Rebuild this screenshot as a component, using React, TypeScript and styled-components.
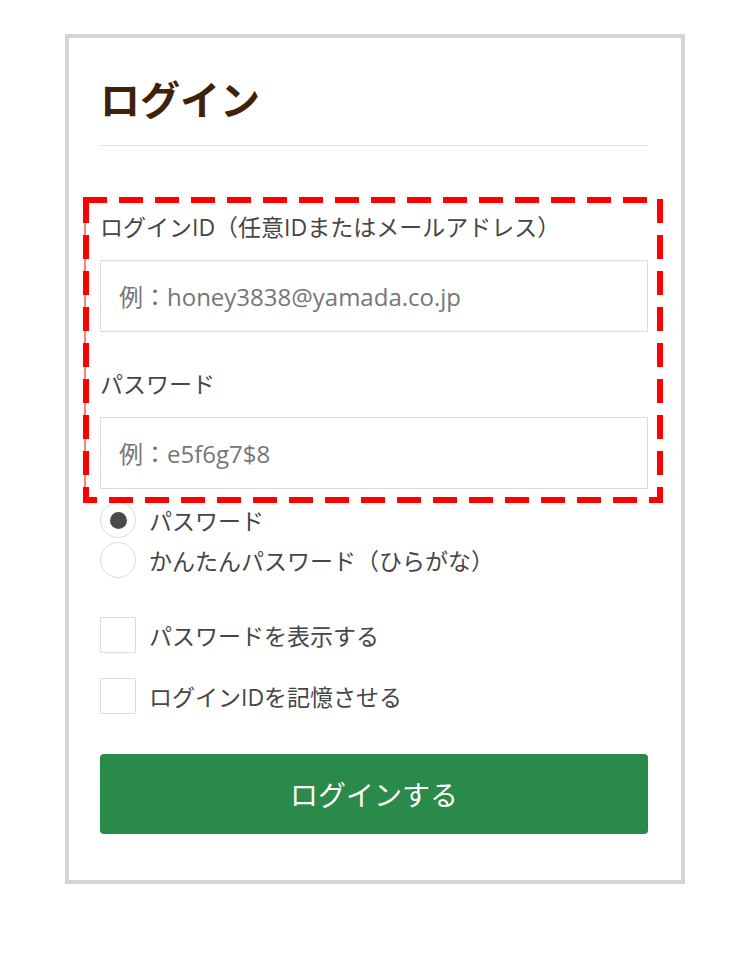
import React from "react";
import styled, { createGlobalStyle } from "styled-components";

const GlobalStyle = createGlobalStyle`
  body {
    margin: 0;
    background: #fff;
    font-family: "Open Sans", "Noto Sans CJK JP", sans-serif;
  }
`;

const jp = `"Noto Sans CJK JP", sans-serif`;
const latinJp = `"Open Sans", "Noto Sans CJK JP", sans-serif`;

export default function App() {
  return (
    <>
      <GlobalStyle />
      <Card>
        <Title>ログイン</Title>
        <Fields>
          <Label htmlFor="login-id">ログインID（任意IDまたはメールアドレス）</Label>
          <TextInput id="login-id" placeholder="例：honey3838@yamada.co.jp" />
          <Label htmlFor="login-pw" $gap>
            パスワード
          </Label>
          <TextInput id="login-pw" placeholder="例：e5f6g7$8" />
          <Marker viewBox="0 0 580 306" preserveAspectRatio="none">
            <line x1="2" y1="0" x2="2" y2="306" stroke="#ff0000" strokeWidth="1" />
            <rect
              x="3"
              y="3"
              width="574"
              height="300"
              fill="none"
              stroke="#ff0000"
              strokeWidth="6"
              strokeDasharray="18 18"
              strokeLinecap="square"
            />
          </Marker>
        </Fields>

        <RadioGroup>
          <Choice>
            <Radio type="radio" name="pwtype" defaultChecked />
            パスワード
          </Choice>
          <Choice>
            <Radio type="radio" name="pwtype" />
            かんたんパスワード（ひらがな）
          </Choice>
        </RadioGroup>

        <CheckGroup>
          <Choice>
            <Check type="checkbox" />
            パスワードを表示する
          </Choice>
          <Choice>
            <Check type="checkbox" />
            ログインIDを記憶させる
          </Choice>
        </CheckGroup>

        <SubmitButton type="button">ログインする</SubmitButton>
      </Card>
    </>
  );
}

const Card = styled.div`
  box-sizing: border-box;
  width: 620px;
  margin: 34px 0 0 65px;
  border: 4px solid #d4d4d4;
  padding: 30px 33px 46px 31px;
  background: #fff;
`;

const Title = styled.h1`
  margin: 0;
  padding-bottom: 17px;
  border-bottom: 1px solid #e3e3e3;
  font-family: ${jp};
  font-size: 40px;
  font-weight: 700;
  line-height: 60px;
  color: #3e2209;
`;

const Fields = styled.div`
  position: relative;
  margin-top: 64px;
`;

const Label = styled.label<{ $gap?: boolean }>`
  display: block;
  margin-top: ${(p) => (p.$gap ? "35px" : "0")};
  font-family: ${latinJp};
  font-size: 23px;
  line-height: 34px;
  color: #464646;
`;

const TextInput = styled.input`
  display: block;
  box-sizing: border-box;
  width: 100%;
  height: 72px;
  margin-top: 16px;
  padding: 0 18px;
  border: 1px solid #dcdcdc;
  border-radius: 0;
  outline: none;
  font-family: ${latinJp};
  font-size: 24px;
  color: #333;

  &::placeholder {
    color: #767676;
  }
`;

const Marker = styled.svg`
  position: absolute;
  top: -13px;
  bottom: -14px;
  left: -17px;
  right: -15px;
  width: 580px;
  height: 306px;
  pointer-events: none;
`;

const RadioGroup = styled.div`
  display: flex;
  flex-direction: column;
  gap: 4px;
  margin-top: 13px;
`;

const CheckGroup = styled.div`
  display: flex;
  flex-direction: column;
  gap: 25px;
  margin-top: 39px;
`;

const Choice = styled.label`
  display: flex;
  align-items: center;
  gap: 13px;
  height: 36px;
  font-family: ${latinJp};
  font-size: 23px;
  color: #464646;
`;

const Radio = styled.input`
  appearance: none;
  box-sizing: border-box;
  flex: none;
  width: 36px;
  height: 36px;
  margin: 0;
  border: 1px solid #dcdcdc;
  border-radius: 50%;
  background: #fff;
  display: grid;
  place-items: center;

  &:checked::after {
    content: "";
    width: 17px;
    height: 17px;
    border-radius: 50%;
    background: #4a4a4a;
  }
`;

const Check = styled.input`
  appearance: none;
  box-sizing: border-box;
  flex: none;
  width: 36px;
  height: 36px;
  margin: 0;
  border: 1px solid #dcdcdc;
  border-radius: 1px;
  background: #fff;
`;

const SubmitButton = styled.button`
  display: block;
  width: 100%;
  height: 80px;
  margin-top: 40px;
  border: none;
  border-radius: 4px;
  background: #2a8a4a;
  color: #fff;
  font-family: ${jp};
  font-size: 28px;
  cursor: pointer;
`;
